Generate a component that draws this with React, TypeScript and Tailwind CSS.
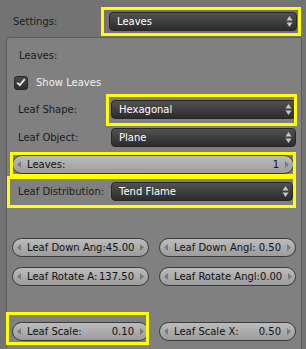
import React from "react";

const font = { fontFamily: '"DejaVu Sans", "Liberation Sans", sans-serif' };

function UpDown() {
  return (
    <svg width="7" height="13" viewBox="0 0 7 13" className="shrink-0">
      <path d="M3.5 1 L6.5 5.5 L0.5 5.5 Z" fill="#c8c8c8" />
      <path d="M3.5 12 L6.5 7.5 L0.5 7.5 Z" fill="#c8c8c8" />
    </svg>
  );
}

function Dropdown({ value, className = "" }: { value: string; className?: string }) {
  return (
    <div
      className={`h-[19px] rounded-[4px] border border-[#262626] bg-gradient-to-b from-[#525252] to-[#2c2c2c] flex items-center pl-[7px] pr-[3px] text-white ${className}`}
    >
      <span className="flex-1 leading-none">{value}</span>
      <UpDown />
    </div>
  );
}

function Slider({ label, value, className = "" }: { label: string; value: string; className?: string }) {
  return (
    <div
      className={`h-[19px] rounded-full border border-[#3a3a3a] bg-gradient-to-b from-[#bcbcbc] to-[#9c9c9c] flex items-center px-[4px] text-[#111] ${className}`}
    >
      <svg width="4" height="7" viewBox="0 0 4 7" className="shrink-0">
        <path d="M0 3.5 L4 0 L4 7 Z" fill="#7a7a7a" />
      </svg>
      <span className="ml-[6px] leading-none whitespace-nowrap">{label}</span>
      <span className="flex-1" />
      <span className="mr-[6px] leading-none">{value}</span>
      <svg width="4" height="7" viewBox="0 0 4 7" className="shrink-0">
        <path d="M4 3.5 L0 0 L0 7 Z" fill="#7a7a7a" />
      </svg>
    </div>
  );
}

function Row({ label, children }: { label: string; children: React.ReactNode }) {
  return (
    <div className="flex items-center h-[19px]">
      <div className="pl-[6px] w-[99px] text-[#1c1c1c] leading-none">{label}</div>
      <div className="flex-1">{children}</div>
    </div>
  );
}

function Hl({ className }: { className: string }) {
  return <div className={`absolute border-[3px] border-[#ffff00] pointer-events-none ${className}`} />;
}

export default function App() {
  return (
    <div
      className="relative w-[306px] h-[349px] overflow-hidden bg-[#737373] text-[10px]"
      style={font}
    >
      <div className="pt-[12px] flex items-center h-[31px]">
        <div className="pl-[13px] w-[109px] text-[#1c1c1c] leading-none">Settings:</div>
        <Dropdown value="Leaves" className="w-[188px]" />
      </div>
      <div className="ml-[6px] mt-[6px] w-[296px] h-[320px] bg-[#808080] border-l border-t border-r border-[#5e5e5e] rounded-tr-[4px] rounded-tl-[4px] px-[5px]">
        <div className="mt-[8px] h-[19px] flex items-center pl-[7px] text-[#1c1c1c] leading-none">Leaves:</div>
        <div className="mt-[8px] h-[19px] flex items-center pl-[2px]">
          <div className="w-[14px] h-[14px] rounded-[3px] bg-gradient-to-b from-[#4a4a4a] to-[#2e2e2e] border border-[#262626] flex items-center justify-center">
            <svg width="10" height="9" viewBox="0 0 10 9">
              <path d="M1.2 4.6 L3.8 7.2 L8.8 1.2" fill="none" stroke="#e8e8e8" strokeWidth="1.8" />
            </svg>
          </div>
          <span className="ml-[8px] text-[#f0f0f0] leading-none">Show Leaves</span>
        </div>
        <div className="mt-[8px]">
          <Row label="Leaf Shape:">
            <Dropdown value="Hexagonal" />
          </Row>
        </div>
        <div className="mt-[9px]">
          <Row label="Leaf Object:">
            <Dropdown value="Plane" />
          </Row>
        </div>
        <div className="mt-[8px] pr-[2px]">
          <Slider label="Leaves:" value="1" />
        </div>
        <div className="mt-[8px]">
          <Row label="Leaf Distribution:">
            <Dropdown value="Tend Flame" className="mr-[3px]" />
          </Row>
        </div>
        <div className="mt-[37px] grid grid-cols-2 gap-[10px]">
          <Slider label="Leaf Down Ang:" value="45.00" className="[&>span:nth-of-type(3)]:mr-[6px]" />
          <Slider label="Leaf Down Angl:" value="0.50" />
        </div>
        <div className="mt-[10px] grid grid-cols-2 gap-[10px]">
          <Slider label="Leaf Rotate A:" value="137.50" />
          <Slider label="Leaf Rotate Angl:" value="0.00" />
        </div>
        <div className="mt-[36px] grid grid-cols-2 gap-[10px]">
          <Slider label="Leaf Scale:" value="0.10" />
          <Slider label="Leaf Scale X:" value="0.50" />
        </div>
      </div>

      <Hl className="left-[101px] top-[7px] w-[200px] h-[29px]" />
      <Hl className="left-[106px] top-[94px] w-[191px] h-[32px]" />
      <Hl className="left-[10px] top-[152px] w-[286px] h-[25px]" />
      <Hl className="left-[7px] top-[176px] w-[289px] h-[32px]" />
      <Hl className="left-[6px] top-[312px] w-[143px] h-[33px]" />
    </div>
  );
}
